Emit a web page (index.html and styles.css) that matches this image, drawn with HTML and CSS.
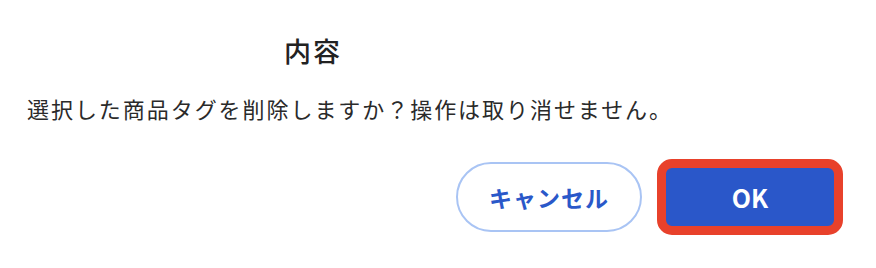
FILE: index.html
```html
<!DOCTYPE html>
<html lang="ja">
<head>
<meta charset="utf-8">
<title>内容</title>
<link rel="stylesheet" href="styles.css">
</head>
<body>
<div class="dialog">
  <h2 class="title">内容</h2>
  <p class="message">選択した商品タグを削除しますか？操作は取り消せません。</p>
  <div class="actions">
    <button class="btn btn-cancel" type="button">キャンセル</button>
    <button class="btn btn-ok" type="button">OK</button>
  </div>
</div>
</body>
</html>
```

FILE: styles.css
```css
html, body {
  margin: 0;
  padding: 0;
  background: #ffffff;
}

body {
  font-family: "Noto Sans CJK JP", "Noto Sans", sans-serif;
  color: #222222;
}

.dialog {
  width: 876px;
  height: 268px;
  box-sizing: border-box;
  padding: 33px 33px 0 27px;
  display: flex;
  flex-direction: column;
}

.title {
  margin: 0 0 0 257px;
  font-size: 27px;
  line-height: 36px;
  font-weight: 500;
  letter-spacing: 2px;
  color: #222222;
}

.message {
  margin: 25px 0 0 0;
  font-size: 22px;
  line-height: 28px;
  font-weight: 400;
  letter-spacing: 1.95px;
  color: #2a2a2a;
}

.actions {
  margin-top: 37px;
  display: flex;
  justify-content: flex-end;
  align-items: center;
  gap: 15px;
}

.btn {
  font-family: "Noto Sans CJK JP", "Noto Sans", sans-serif;
  font-weight: 700;
  box-sizing: border-box;
  cursor: pointer;
  padding: 0;
  margin: 0;
}

.btn-cancel {
  width: 186px;
  height: 70px;
  border: 2px solid #a9c4f4;
  border-radius: 35px;
  background: #ffffff;
  color: #2a58c9;
  font-size: 23px;
  letter-spacing: 1px;
}

.btn-ok {
  width: 186px;
  height: 76px;
  border: 9px solid #e8412b;
  border-radius: 15px;
  background: #2a57c9;
  color: #ffffff;
  font-size: 25px;
  letter-spacing: 0;
}
```
